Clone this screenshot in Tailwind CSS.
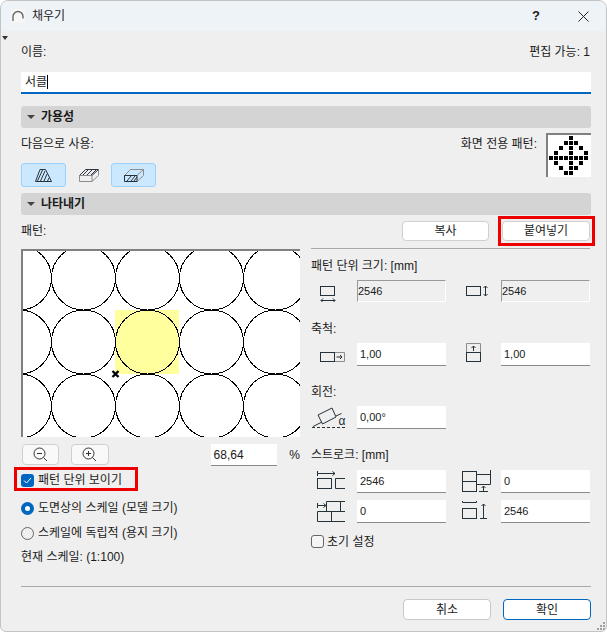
<!DOCTYPE html>
<html lang="ko">
<head>
    <meta charset="UTF-8">
    <title>채우기</title>
    <script src="https://cdn.jsdelivr.net/npm/@tailwindcss/browser@4"></script>
</head>
<body class="bg-white">
<div class="relative w-[607px] h-[632px] overflow-hidden flex flex-col bg-[#efefef] border border-[#c4c4c4] rounded-t-[8px] rounded-b-[6px] text-[12px] leading-[18px] text-[#1a1a1a] font-['Liberation_Sans','Noto_Sans_CJK_KR',sans-serif]">

    <!-- title bar -->
    <div class="h-[30px] shrink-0 flex items-center bg-[#eef3f8] pl-[10px]">
        <svg width="14" height="14" viewBox="0 0 14 14" fill="none"><rect x="0" y="0" width="14" height="14" rx="3" fill="#f7f7f7"/><path d="M2 12 V7.5 A5 5 0 0 1 12 7.5 V9.5" stroke="#666" stroke-width="1.4"/></svg>
        <span class="ml-[7px] text-[#222]">채우기</span>
        <span class="ml-auto mr-[38px] font-bold text-[13px]">?</span>
        <svg class="mr-[17px]" width="11" height="11" viewBox="0 0 11 11" fill="none" stroke="#222" stroke-width="1"><path d="M0.5 0.5 L10.5 10.5 M10.5 0.5 L0.5 10.5"/></svg>
    </div>
    <div class="absolute left-[1px] top-[35px] w-0 h-0 border-x-[3px] border-x-transparent border-t-[4px] border-t-[#333]"></div>

    <div class="flex-1 flex flex-col pl-[20px] pr-[15px] pt-[11px]">
        <div class="h-[18px] flex justify-between pt-px">
            <span>이름:</span>
            <span class="mr-[1px]">편집 가능: 1</span>
        </div>
        <div class="mt-[12px] h-[22px] bg-white border-b-2 border-[#0067c0] pl-[4px] flex items-center">서클<span class="w-px h-[14px] bg-black"></span></div>

        <!-- 가용성 -->
        <div class="mt-[12px] h-[22px] bg-[#d4d4d4] rounded-[3px] flex items-center pl-[6px]">
            <span class="w-0 h-0 border-x-[4px] border-x-transparent border-t-[4px] border-t-[#444]"></span>
            <span class="ml-[6px] font-bold">가용성</span>
        </div>
        <div class="mt-[5px] h-[54px] flex justify-between">
            <div>
                <div class="mt-[1px] h-[18px] pt-px">다음으로 사용:</div>
                <div class="mt-[11px] flex">
                    <div class="w-[45px] h-[24px] bg-[#cce8ff] border border-[#99d1ff] rounded-[3px] flex items-center justify-center">
                        <svg width="18" height="13" viewBox="0 0 18 13" fill="none" stroke="#26323a"><path d="M0.5 12.5 L5 0.5 H10.5 L16.5 12.5 Z"/><path d="M2.5 12 L7.5 1 M5.5 12 L10 2 M9 12 L12 5 M12.5 12 L14 9"/></svg>
                    </div>
                    <div class="w-[45px] h-[24px] flex items-center justify-center">
                        <svg width="20" height="13" viewBox="0 0 20 13" fill="none"><path d="M0.5 6.5 L6.5 0.5 H19.5 L13 6.5 Z M4 6 L9 1 M8 6 L13 1 M12 6 L17 1" stroke="#2b3640"/><path d="M0.5 6.5 H13 V12.5 H0.5 Z M13 12.5 L19.5 6.5 V0.5" stroke="#8c8c8c"/></svg>
                    </div>
                    <div class="w-[45px] h-[24px] bg-[#cce8ff] border border-[#99d1ff] rounded-[3px] flex items-center justify-center">
                        <svg width="20" height="13" viewBox="0 0 20 13" fill="none"><path d="M0.5 6.5 L6.5 0.5 H19.5 V6.5 L13 12.5 M13 6.5 L19.5 0.5" stroke="#8c8c8c"/><path d="M0.5 6.5 H13 V12.5 H0.5 Z M3 12 L7 7 M7 12 L11 7 M10 12 L13 8" stroke="#26323a"/></svg>
                    </div>
                </div>
            </div>
            <div class="flex">
                <span class="mt-[2px] mr-[9px]">화면 전용 패턴:</span>
                <svg class="w-[45px] h-[44px] bg-white border-t-2 border-l-2 border-[#808080]" viewBox="0 0 43 42" fill="#000">
                    <rect x="21" y="1" width="4" height="4"/>
                    <rect x="16" y="6" width="4" height="4"/><rect x="21" y="6" width="4" height="4"/><rect x="26" y="6" width="4" height="4"/>
                    <rect x="11" y="11" width="4" height="4"/><rect x="21" y="11" width="4" height="4"/><rect x="31" y="11" width="4" height="4"/>
                    <rect x="6" y="16" width="4" height="4"/><rect x="21" y="16" width="4" height="4"/><rect x="36" y="16" width="4" height="4"/>
                    <rect x="1" y="21" width="4" height="4"/><rect x="6" y="21" width="4" height="4"/><rect x="11" y="21" width="4" height="4"/><rect x="16" y="21" width="4" height="4"/><rect x="21" y="21" width="4" height="4"/><rect x="26" y="21" width="4" height="4"/><rect x="31" y="21" width="4" height="4"/><rect x="36" y="21" width="4" height="4"/>
                    <rect x="6" y="26" width="4" height="4"/><rect x="21" y="26" width="4" height="4"/><rect x="31" y="26" width="4" height="4"/>
                    <rect x="11" y="31" width="4" height="4"/><rect x="21" y="31" width="4" height="4"/><rect x="26" y="31" width="4" height="4"/>
                    <rect x="16" y="36" width="4" height="4"/><rect x="21" y="36" width="4" height="4"/>
                </svg>
            </div>
        </div>

        <!-- 나타내기 -->
        <div class="mt-[6px] h-[22px] bg-[#d4d4d4] rounded-[3px] flex items-center pl-[6px]">
            <span class="w-0 h-0 border-x-[4px] border-x-transparent border-t-[4px] border-t-[#444]"></span>
            <span class="ml-[6px] font-bold">나타내기</span>
        </div>

        <div class="flex">
            <!-- left column -->
            <div class="w-[279px] shrink-0">
                <div class="mt-[6px] h-[18px] pt-px">패턴:</div>
                <div class="mt-[10px] w-[279px] h-[188px] bg-white border-t-2 border-l-2 border-[#808080]">
                    <svg class="block" width="277" height="186" viewBox="0 0 277 186" fill="none">
                        <rect x="92" y="59" width="64" height="64" fill="#ffff9e"/>
                        <g stroke="#000" shape-rendering="crispEdges">
                            <circle cx="-3.5" cy="27" r="32"/><circle cx="60.5" cy="27" r="32"/><circle cx="124.5" cy="27" r="32"/><circle cx="188.5" cy="27" r="32"/><circle cx="252.5" cy="27" r="32"/>
                            <circle cx="-3.5" cy="91" r="32"/><circle cx="60.5" cy="91" r="32"/><circle cx="124.5" cy="91" r="32"/><circle cx="188.5" cy="91" r="32"/><circle cx="252.5" cy="91" r="32"/>
                            <circle cx="-3.5" cy="155" r="32"/><circle cx="60.5" cy="155" r="32"/><circle cx="124.5" cy="155" r="32"/><circle cx="188.5" cy="155" r="32"/><circle cx="252.5" cy="155" r="32"/>
                        </g>
                        <path d="M89.5 120 L95.5 126 M95.5 120 L89.5 126" stroke="#000" stroke-width="2.4"/>
                    </svg>
                </div>
                <div class="mt-[7px] h-[22px] flex items-start">
                    <div class="ml-[1px] w-[38px] h-[21px] bg-[#f9f9f9] border border-[#d0d0d0] rounded-[4px] flex items-center justify-center">
                        <svg width="15" height="15" viewBox="0 0 15 15" fill="none" stroke="#333"><circle cx="6.5" cy="6.5" r="5.5"/><path d="M4 6.5 H9 M10.5 10.5 L14 14"/></svg>
                    </div>
                    <div class="ml-[12px] w-[38px] h-[21px] bg-[#f9f9f9] border border-[#d0d0d0] rounded-[4px] flex items-center justify-center">
                        <svg width="15" height="15" viewBox="0 0 15 15" fill="none" stroke="#333"><circle cx="6.5" cy="6.5" r="5.5"/><path d="M4 6.5 H9 M6.5 4 V9 M10.5 10.5 L14 14"/></svg>
                    </div>
                    <div class="ml-[102px] w-[68px] h-[22px] bg-white border-b border-[#8a8a8a] pl-[3px] flex items-center">68,64</div>
                    <span class="ml-[12px] leading-[22px]">%</span>
                </div>
                <div class="relative mt-[7px] h-[14px] flex items-center">
                    <span class="w-[13px] h-[13px] bg-[#0067c0] rounded-[3px] flex items-center justify-center">
                        <svg width="9" height="7" viewBox="0 0 9 7" fill="none" stroke="#fff"><path d="M1 3.5 L3.5 6 L8 1"/></svg>
                    </span>
                    <span class="ml-[4px]">패턴 단위 보이기</span>
                    <div class="absolute left-[-7px] top-[-6px] w-[124px] h-[24px] border-[3px] border-[#ee0000]"></div>
                </div>
                <div class="mt-[14px] h-[14px] flex items-center">
                    <span class="w-[13px] h-[13px] bg-[#0067c0] rounded-full flex items-center justify-center"><span class="w-[5px] h-[5px] bg-white rounded-full"></span></span>
                    <span class="ml-[4px]">도면상의 스케일 (모델 크기)</span>
                </div>
                <div class="mt-[11px] h-[14px] flex items-center">
                    <span class="w-[13px] h-[13px] border border-[#666] rounded-full"></span>
                    <span class="ml-[4px]">스케일에 독립적 (용지 크기)</span>
                </div>
                <div class="mt-[8px] h-[18px]">현재 스케일: (1:100)</div>
            </div>

            <!-- right column -->
            <div class="ml-[11px] w-[279px]">
                <div class="mt-[6px] h-[20px] flex justify-end">
                    <div class="w-[87px] h-[20px] bg-white border border-[#d0d0d0] rounded-[4px] flex items-center justify-center">복사</div>
                    <div class="relative ml-[13px] w-[88px] h-[20px] bg-white border border-[#d0d0d0] rounded-[4px] flex items-center justify-center">
                        붙여넣기
                        <div class="absolute left-[-5px] top-[-6px] w-[97px] h-[30px] border-[3px] border-[#ee0000]"></div>
                    </div>
                </div>
                <div class="mt-[7px] h-px bg-[#a8a8a8]"></div>

                <div class="mt-[7px] h-[18px] pt-px">패턴 단위 크기: [mm]</div>
                <div class="mt-[6px] grid grid-cols-[46px_89px_55px_89px] h-[22px] text-[11px]">
                    <svg width="46" height="22" viewBox="0 0 46 22" fill="none" stroke="#26323a"><rect x="9.5" y="6.5" width="14" height="9"/><path d="M10 20.5 H24 M12 18.5 L10 20.5 L12 22.5 M22 18.5 L24 20.5 L22 22.5"/></svg>
                    <div class="bg-[#efefef] border-t border-l border-[#999] border-r border-b border-r-white border-b-white flex items-center">2546</div>
                    <svg width="55" height="22" viewBox="0 0 55 22" fill="none" stroke="#26323a"><rect x="20.5" y="6.5" width="14" height="9"/><path d="M39.5 6 V16 M37.5 8 L39.5 6 L41.5 8 M37.5 14 L39.5 16 L41.5 14"/></svg>
                    <div class="bg-[#efefef] border-t border-l border-[#999] border-r border-b border-r-white border-b-white flex items-center">2546</div>
                </div>

                <div class="mt-[17px] h-[18px] pt-px">축척:</div>
                <div class="mt-[6px] grid grid-cols-[46px_89px_55px_89px] h-[23px] text-[11px]">
                    <svg width="46" height="23" viewBox="0 0 46 23" fill="none"><path d="M24 18.5 H33.5 V9.5 H24" stroke="#8c8c8c"/><rect x="9.5" y="9.5" width="14" height="9" stroke="#26323a"/><path d="M25.5 14 H31 M29 12 L31 14 L29 16" stroke="#26323a"/></svg>
                    <div class="bg-white border-b border-[#8a8a8a] pl-[3px] flex items-center">1,00</div>
                    <svg width="55" height="23" viewBox="0 0 55 23" fill="none"><path d="M20.5 9 V0.5 H34.5 V9" stroke="#8c8c8c"/><rect x="20.5" y="9.5" width="14" height="9" stroke="#26323a"/><path d="M27.5 8 V3 M25.5 5 L27.5 3 L29.5 5" stroke="#26323a"/></svg>
                    <div class="bg-white border-b border-[#8a8a8a] pl-[3px] flex items-center">1,00</div>
                </div>

                <div class="mt-[16px] h-[18px] pt-px">회전:</div>
                <div class="mt-[6px] grid grid-cols-[46px_89px_55px_89px] h-[23px] text-[11px]">
                    <svg width="46" height="23" viewBox="0 0 46 23" fill="none" stroke="#26323a"><path d="M7 9 L21 2 L25 11 L11.5 18 Z"/><path d="M2 20.5 L11 16 M25 10 L30.5 7.5"/><path d="M1 21.5 H34" stroke-dasharray="3 2"/><text x="27.5" y="19" font-size="12" fill="#26323a" stroke="none" font-family="Liberation Sans">α</text></svg>
                    <div class="bg-white border-b border-[#8a8a8a] pl-[3px] flex items-center">0,00°</div>
                </div>

                <div class="mt-[17px] h-[18px]">스트로크: [mm]</div>
                <div class="mt-[6px] grid grid-cols-[46px_89px_55px_89px] grid-rows-[23px_23px] gap-y-[7px] text-[11px]">
                    <svg width="46" height="23" viewBox="0 0 46 23" fill="none" stroke="#26323a"><path d="M6.5 1 V6 M6.5 3.5 H24 M21.5 1.5 L24 3.5 L21.5 5.5"/><rect x="6.5" y="8.5" width="14" height="10"/><path d="M34 8.5 H24.5 V18.5 H34"/></svg>
                    <div class="bg-white border-b border-[#8a8a8a] pl-[3px] flex items-center">2546</div>
                    <svg width="55" height="23" viewBox="0 0 55 23" fill="none" stroke="#26323a"><rect x="16.5" y="1.5" width="14" height="10"/><rect x="16.5" y="11.5" width="14" height="10"/><path d="M30.5 4.5 H44.5 V14.5 H30.5 M44.5 0 V5 M37.5 21 V16 M35.5 18 L37.5 16 L39.5 18 M33 21.5 H42"/></svg>
                    <div class="bg-white border-b border-[#8a8a8a] pl-[3px] flex items-center">0</div>
                    <svg width="46" height="23" viewBox="0 0 46 23" fill="none" stroke="#26323a"><path d="M6.5 3 V8 M6.5 5.5 H15 M12.5 3.5 L15 5.5 L12.5 7.5"/><path d="M34 1.5 H15.5 V11.5 H34 M29.5 1.5 V11.5"/><path d="M34 11.5 H6.5 V21.5 H34 M20.5 11.5 V21.5"/></svg>
                    <div class="bg-white border-b border-[#8a8a8a] pl-[3px] flex items-center">0</div>
                    <svg width="55" height="23" viewBox="0 0 55 23" fill="none" stroke="#26323a"><path d="M16.5 1 V2.5 H30.5 V1"/><rect x="16.5" y="8.5" width="14" height="10"/><path d="M37.5 18 V4 M35.5 6 L37.5 4 L39.5 6 M34 18.5 H41"/></svg>
                    <div class="bg-white border-b border-[#8a8a8a] pl-[3px] flex items-center">2546</div>
                </div>
                <div class="mt-[12px] h-[13px] flex items-center">
                    <span class="w-[13px] h-[13px] bg-[#f5f5f5] border border-[#666] rounded-[3px]"></span>
                    <span class="ml-[3px]">초기 설정</span>
                </div>
            </div>
        </div>

        <!-- footer -->
        <div class="absolute left-[20px] right-[15px] top-[585px] h-px bg-[#a8a8a8]"></div>
        <div class="absolute right-[15px] top-[598px] flex">
            <div class="w-[88px] h-[21px] bg-white border border-[#c8c8c8] rounded-[4px] flex items-center justify-center">취소</div>
            <div class="ml-[12px] w-[88px] h-[21px] bg-white border border-[#0067c0] rounded-[4px] flex items-center justify-center">확인</div>
        </div>
    </div>

    <svg class="absolute right-[1px] bottom-[1px]" width="8" height="8" viewBox="0 0 8 8" fill="#a0a0a0"><rect x="6" y="0" width="2" height="2"/><rect x="3" y="3" width="2" height="2"/><rect x="6" y="3" width="2" height="2"/><rect x="0" y="6" width="2" height="2"/><rect x="3" y="6" width="2" height="2"/><rect x="6" y="6" width="2" height="2"/></svg>
</div>
</body>
</html>
